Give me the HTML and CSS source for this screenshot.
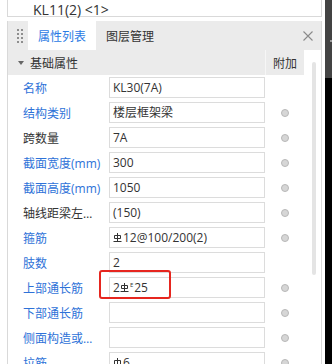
FILE: index.html
```html
<!DOCTYPE html>
<html>
<head>
<meta charset="UTF-8">
<meta name="viewport" content="width=device-width, initial-scale=1">
<link rel="stylesheet" href="styles.css">
</head>
<body>

<div class="wrap">
  <div class="main">
    <div class="crumb">KL11(2) &lt;1&gt;</div>

    <div class="panel">
      <div class="tabs">
        <svg class="grip" width="6" height="14" viewBox="0 0 6 14">
          <rect x="0" y="0" width="2" height="2"/><rect x="4" y="0" width="2" height="2"/>
          <rect x="0" y="4" width="2" height="2"/><rect x="4" y="4" width="2" height="2"/>
          <rect x="0" y="8" width="2" height="2"/><rect x="4" y="8" width="2" height="2"/>
          <rect x="0" y="12" width="2" height="2"/><rect x="4" y="12" width="2" height="2"/>
        </svg>
        <span class="tab active">属性列表</span>
        <span class="tab">图层管理</span>
        <svg class="close" width="10" height="10" viewBox="0 0 10 10">
          <path d="M0.5 0.5L9.5 9.5M9.5 0.5L0.5 9.5"/>
        </svg>
      </div>

      <div class="body">
        <div class="table">
          <div class="group">
            <span class="tri"></span>
            <span class="title">基础属性</span>
            <span class="extra">附加</span>
          </div>

          <div class="row">
            <span class="label blue">名称</span>
            <span class="val">KL30(7A)</span>
            <span class="cell"></span>
          </div>
          <div class="row">
            <span class="label blue">结构类别</span>
            <span class="val">楼层框架梁</span>
            <span class="cell"><i class="dot"></i></span>
          </div>
          <div class="row">
            <span class="label">跨数量</span>
            <span class="val">7A</span>
            <span class="cell"><i class="dot"></i></span>
          </div>
          <div class="row">
            <span class="label blue">截面宽度(mm)</span>
            <span class="val">300</span>
            <span class="cell"><i class="dot"></i></span>
          </div>
          <div class="row">
            <span class="label blue">截面高度(mm)</span>
            <span class="val">1050</span>
            <span class="cell"><i class="dot"></i></span>
          </div>
          <div class="row">
            <span class="label">轴线距梁左侧距离(mm)</span>
            <span class="val">(150)</span>
            <span class="cell"><i class="dot"></i></span>
          </div>
          <div class="row">
            <span class="label blue">箍筋</span>
            <span class="val"><svg class="rb" width="9" height="10" viewBox="0 0 9 10"><path d="M4.5 0V8.5M1.5 2.5H7.5V5.5H1.5ZM0.5 8.5H8.5"/></svg>12@100/200(2)</span>
            <span class="cell"><i class="dot"></i></span>
          </div>
          <div class="row">
            <span class="label blue">肢数</span>
            <span class="val">2</span>
            <span class="cell"></span>
          </div>
          <div class="row">
            <span class="label blue">上部通长筋</span>
            <span class="val">2<svg class="rb" width="9" height="10" viewBox="0 0 9 10"><path d="M4.5 0V8.5M1.5 2.5H7.5V5.5H1.5ZM0.5 8.5H8.5"/></svg><sup class="e">E</sup>25</span>
            <span class="cell"><i class="dot"></i></span>
            <div class="mark"></div>
          </div>
          <div class="row">
            <span class="label blue">下部通长筋</span>
            <span class="val"></span>
            <span class="cell"><i class="dot"></i></span>
          </div>
          <div class="row">
            <span class="label blue">侧面构造或受扭筋(总配筋值)</span>
            <span class="val"></span>
            <span class="cell"><i class="dot"></i></span>
          </div>
          <div class="row">
            <span class="label blue">拉筋</span>
            <span class="val"><svg class="rb" width="9" height="10" viewBox="0 0 9 10"><path d="M4.5 0V10M1.5 2.5H7.5V6.5H1.5Z"/></svg>6</span>
            <span class="cell"><i class="dot"></i></span>
          </div>
        </div>

        <div class="scroll"><div class="thumb"></div></div>
      </div>
    </div>
  </div>

  <div class="edge"><i class="edge-mark"></i></div>
</div>

</body>
</html>
```

FILE: styles.css
```css
* {
  box-sizing: border-box;
}

body {
  margin: 0;
  width: 332px;
  height: 364px;
  overflow: hidden;
  background: #fff;
  font-family: "Open Sans", "Noto Sans CJK SC", sans-serif;
  font-size: 12px;
  color: #333;
}

.wrap {
  display: flex;
  height: 364px;
}

.main {
  width: 315px;
  margin-left: 7px;
}

.crumb {
  height: 17px;
  border: 1px solid #d9d9d9;
  border-top: none;
  padding-left: 25px;
  font-size: 14px;
  line-height: 19px;
  white-space: nowrap;
}

.panel {
  margin-top: 4px;
  height: 350px;
  border: 1px solid #d9d9d9;
  border-top: none;
}

/* tab bar */
.tabs {
  display: flex;
  align-items: center;
  height: 29px;
  background: #ebebeb;
}

.grip {
  fill: #8e8e8e;
  margin: 1px 5px 0 9px;
}

.tab {
  align-self: stretch;
  padding: 0 10px;
  line-height: 29px;
  font-family: "Noto Sans CJK SC", sans-serif;
  font-size: 12px;
  color: #333;
}

.tab.active {
  background: #fff;
  color: #2a7ae4;
}

.close {
  margin-left: auto;
  margin-right: 8px;
  stroke: #8a8a8a;
  stroke-width: 1.1;
}

/* property table */
.body {
  display: flex;
}

.table {
  width: 296px;
}

.group {
  display: flex;
  align-items: center;
  height: 25px;
  background: #ebebeb;
  font-family: "Noto Sans CJK SC", sans-serif;
}

.tri {
  width: 0;
  height: 0;
  margin: 1px 6px 0 10px;
  border-left: 3px solid transparent;
  border-right: 3px solid transparent;
  border-top: 4px solid #666;
}

.group .title {
  flex: 1;
}

.extra {
  width: 39px;
  height: 25px;
  line-height: 25px;
  text-align: center;
  border-left: 1px solid #f6f6f6;
}

.row {
  position: relative;
  display: flex;
  align-items: center;
  height: 25px;
}

.label {
  width: 80px;
  margin-left: 15px;
  white-space: nowrap;
  overflow: hidden;
  text-overflow: ellipsis;
  color: #333;
}

.label.blue {
  color: #2e72d8;
}

.val {
  width: 156px;
  height: 21px;
  margin-left: 6px;
  padding-left: 3px;
  border: 1px solid #dcdcdc;
  line-height: 19px;
  white-space: nowrap;
  overflow: hidden;
}

.rb {
  fill: none;
  stroke: #333;
  stroke-width: 1;
  vertical-align: -1px;
  margin: 0 1px 0 0;
}

.e {
  font-size: 6px;
  line-height: 0;
  vertical-align: 5px;
  margin-right: 1px;
}

.cell {
  width: 39px;
  display: flex;
  justify-content: center;
}

.dot {
  width: 8px;
  height: 8px;
  border-radius: 50%;
  background: #d6d6d6;
  border: 1px solid #b8b8b8;
}

/* red annotation box */
.mark {
  position: absolute;
  left: 91px;
  top: -5px;
  width: 72px;
  height: 29px;
  border: 2px solid #e6261f;
  border-radius: 3px;
}

.scroll {
  width: 17px;
  padding: 12px 0 0 8px;
}

.thumb {
  width: 4px;
  height: 213px;
  border-radius: 2px;
  background: #e4e4e4;
}

/* dark window edge on the right */
.edge {
  position: relative;
  width: 7px;
  margin-left: 3px;
  background: linear-gradient(#434343 0, #434343 78px, #000 78px);
}

.edge-mark {
  position: absolute;
  right: 0;
  top: 40px;
  width: 2px;
  height: 2px;
  background: #9a9a9a;
}
```
